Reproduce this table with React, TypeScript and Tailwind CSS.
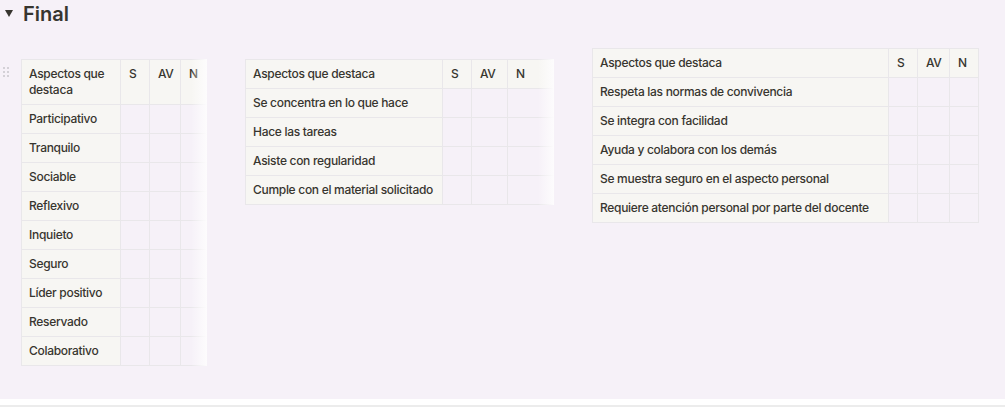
import React from 'react';

type TableProps = {
  rows: string[];
  widths: number[];
  clipWidth?: number;
  fade?: boolean;
};

const font = { fontFamily: 'Inter, "Liberation Sans", sans-serif' };

function DragHandle() {
  return (
    <div className="grid grid-cols-2 gap-x-[2px] gap-y-[2px] w-[6px] mt-[8px]">
      {Array.from({ length: 6 }).map((_, i) => (
        <span key={i} className="block w-[2px] h-[2px] rounded-full bg-[#c9c6cc]" />
      ))}
    </div>
  );
}

function AspectTable({ rows, widths, clipWidth, fade }: TableProps) {
  const cell = 'border border-[#e9e7ea] px-[8px] py-[6px] leading-[16px] text-left align-top';
  const total = widths.reduce((a, b) => a + b, 0);
  return (
    <div className="relative overflow-hidden shrink-0" style={clipWidth ? { width: clipWidth } : undefined}>
      <table
        className="table-fixed border-collapse text-[12px] tracking-[-0.3px] font-medium text-[#37352f]"
        style={{ width: total }}
      >
        <colgroup>
          {widths.map((w, i) => (
            <col key={i} style={{ width: w }} />
          ))}
        </colgroup>
        <thead>
          <tr className="bg-[#f7f6f3]">
            <th className={`${cell} pl-[7px] font-medium`}>Aspectos que destaca</th>
            <th className={`${cell} font-medium`}>S</th>
            <th className={`${cell} font-medium`}>AV</th>
            <th className={`${cell} font-medium`}>N</th>
          </tr>
        </thead>
        <tbody>
          {rows.map((r) => (
            <tr key={r}>
              <td className={`${cell} pl-[7px] bg-[#f7f6f3] whitespace-nowrap`}>{r}</td>
              <td className={cell}></td>
              <td className={cell}></td>
              <td className={cell}></td>
            </tr>
          ))}
        </tbody>
      </table>
      {fade && (
        <div className="absolute top-0 right-0 bottom-0 w-[16px] bg-gradient-to-r from-[#f6f1f8]/0 to-[#fdfcfd]" />
      )}
    </div>
  );
}

export default function App() {
  return (
    <div className="bg-white h-[409px]" style={font}>
      <div className="bg-[#f6f1f8] h-[399px]">
        {/* Toggle heading */}
        <div className="flex items-start h-[48px]">
          <span className="ml-[5px] mt-[10px] w-0 h-0 border-l-[4px] border-r-[4px] border-t-[7px] border-l-transparent border-r-transparent border-t-[#37352f]" />
          <h3 className="ml-[10px] text-[20px] leading-[28px] font-semibold text-[#37352f]">Final</h3>
        </div>

        {/* Columns */}
        <div className="flex items-start">
          <div className="flex items-start mt-[11px] ml-[3px] gap-[12px]">
            <DragHandle />
            <AspectTable
              widths={[99, 29, 31, 40]}
              clipWidth={186}
              fade
              rows={[
                'Participativo',
                'Tranquilo',
                'Sociable',
                'Reflexivo',
                'Inquieto',
                'Seguro',
                'Líder positivo',
                'Reservado',
                'Colaborativo',
              ]}
            />
          </div>
          <div className="mt-[11px] ml-[38px]">
            <AspectTable
              widths={[197, 29, 36, 60]}
              clipWidth={309}
              fade
              rows={[
                'Se concentra en lo que hace',
                'Hace las tareas',
                'Asiste con regularidad',
                'Cumple con el material solicitado',
              ]}
            />
          </div>
          <div className="ml-[38px]">
            <AspectTable
              widths={[296, 29, 32, 29]}
              rows={[
                'Respeta las normas de convivencia',
                'Se integra con facilidad',
                'Ayuda y colabora con los demás',
                'Se muestra seguro en el aspecto personal',
                'Requiere atención personal por parte del docente',
              ]}
            />
          </div>
        </div>
      </div>
      <div className="mt-[6px] h-[2px] bg-[#ececec]" />
    </div>
  );
}
